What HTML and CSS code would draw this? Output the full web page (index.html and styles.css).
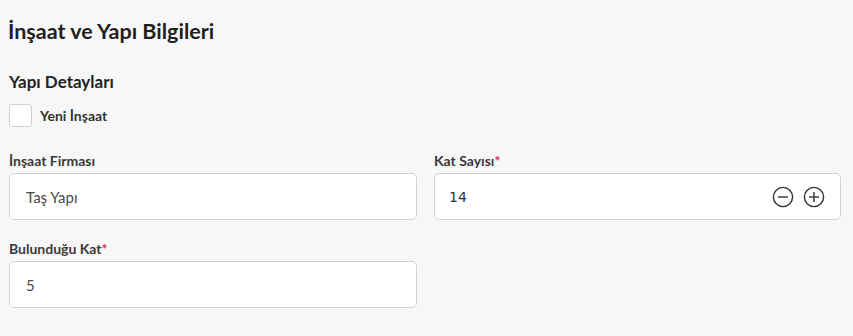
FILE: index.html
```html
<!DOCTYPE html>
<html>
<head>
  <meta charset="utf-8">
  <link rel="stylesheet" href="styles.css">
</head>
<body>
  <div class="page">
    <h1 class="page-title">İnşaat ve Yapı Bilgileri</h1>

    <h3 class="section-title">Yapı Detayları</h3>
    <label class="check">
      <span class="check-box"></span>
      <span class="check-label">Yeni İnşaat</span>
    </label>

    <div class="form-grid">
      <div class="field">
        <label class="field-label">İnşaat Firması</label>
        <div class="input">Taş Yapı</div>
      </div>
      <div class="field">
        <label class="field-label">Kat Sayısı<span class="req">*</span></label>
        <div class="input input-number">
          <span class="value-num">14</span>
          <div class="stepper">
            <svg width="22" height="22" viewBox="0 0 22 22">
              <circle cx="11" cy="11" r="9.6" fill="none" stroke="#333" stroke-width="1.4"/>
              <line x1="6" y1="11" x2="16" y2="11" stroke="#333" stroke-width="1.4"/>
            </svg>
            <svg width="22" height="22" viewBox="0 0 22 22">
              <circle cx="11" cy="11" r="9.6" fill="none" stroke="#333" stroke-width="1.4"/>
              <line x1="6" y1="11" x2="16" y2="11" stroke="#333" stroke-width="1.4"/>
              <line x1="11" y1="6" x2="11" y2="16" stroke="#333" stroke-width="1.4"/>
            </svg>
          </div>
        </div>
      </div>
      <div class="field">
        <label class="field-label">Bulunduğu Kat<span class="req">*</span></label>
        <div class="input">5</div>
      </div>
    </div>
  </div>
</body>
</html>
```

FILE: styles.css
```css
body {
  margin: 0;
  background: #f7f7f7;
  font-family: Lato, "Noto Sans", sans-serif;
  color: #222;
}

.page {
  padding: 17px 13px 0 9px;
}

.page-title {
  margin: 0 0 0 -1px;
  font-size: 21.5px;
  font-weight: 700;
  line-height: 28px;
  color: #1f1f1f;
}

.section-title {
  margin: 26px 0 0 0;
  font-size: 17px;
  font-weight: 700;
  line-height: 22px;
  color: #222;
}

.check {
  display: flex;
  align-items: center;
  gap: 8px;
  margin-top: 11px;
}

.check-box {
  width: 21px;
  height: 21px;
  background: white;
  border: 1px solid #cfcfcf;
  border-radius: 3px;
}

.check-label {
  font-size: 14px;
  font-weight: 700;
  color: #333;
}

.form-grid {
  display: grid;
  grid-template-columns: 408px 407px;
  column-gap: 17px;
  row-gap: 20px;
  margin-top: 25px;
}

.field-label {
  display: block;
  font-size: 14px;
  font-weight: 700;
  color: #3a3a3a;
  line-height: 18px;
  margin-bottom: 3px;
}

.req {
  color: #e0245e;
}

.input {
  box-sizing: border-box;
  height: 47px;
  background: white;
  border: 1px solid #d3d3d3;
  border-radius: 5px;
  padding: 0 16px;
  display: flex;
  align-items: center;
  font-size: 15px;
  color: #4a4a4a;
}

.input-number {
  justify-content: space-between;
  padding-left: 14px;
  padding-right: 15px;
}

.value-num {
  font-family: "DejaVu Sans", sans-serif;
  font-size: 14px;
  color: #333;
}

.stepper {
  display: flex;
  gap: 9px;
}
```
